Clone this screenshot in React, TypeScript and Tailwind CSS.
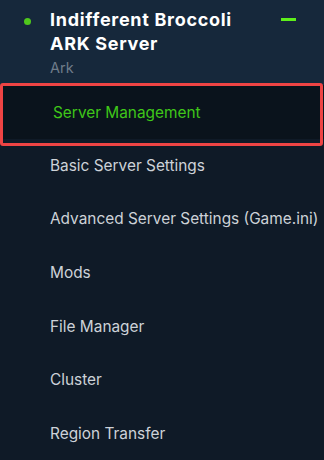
import React from "react";

const items = [
  "Basic Server Settings",
  "Advanced Server Settings (Game.ini)",
  "Mods",
  "File Manager",
  "Cluster",
  "Region Transfer",
];

export default function App() {
  return (
    <div
      className="w-[324px] h-[460px] bg-[#0f1a27] overflow-hidden"
      style={{ fontFamily: "Inter, 'Noto Sans', sans-serif" }}
    >
      <div className="bg-[#16283b] h-[85px] flex pl-[24px] pr-[28px] pt-[8px]">
        <div className="w-[7px] h-[7px] rounded-full bg-[#4fc81c] mt-[10px] shrink-0" />
        <div className="ml-[19px] flex-1">
          <div className="text-[18px] font-bold leading-[24px] tracking-[0.7px] text-white">
            Indifferent Broccoli
            <br />
            ARK Server
          </div>
          <div className="text-[14.5px] leading-[20px] text-[#6f7c8a] mt-[2px]">Ark</div>
        </div>
        <div className="w-[15px] h-[3px] bg-[#5ef01a] mt-[10px] shrink-0" />
      </div>
      <div className="flex flex-col">
        <div className="relative h-[53.6px] bg-[#0a131c] flex items-center pl-[53px]">
          <span className="text-[15.4px] text-[#3fc719] pt-[2px]">Server Management</span>
          <div className="absolute left-0 top-[-2px] w-[323px] h-[63px] border-[3px] border-[#ef4444] rounded-[3px]" />
        </div>
        {items.map((t) => (
          <div key={t} className="h-[53.6px] flex items-center pl-[50px] text-[15.4px] text-[#cdd2d8]">
            {t}
          </div>
        ))}
      </div>
    </div>
  );
}
